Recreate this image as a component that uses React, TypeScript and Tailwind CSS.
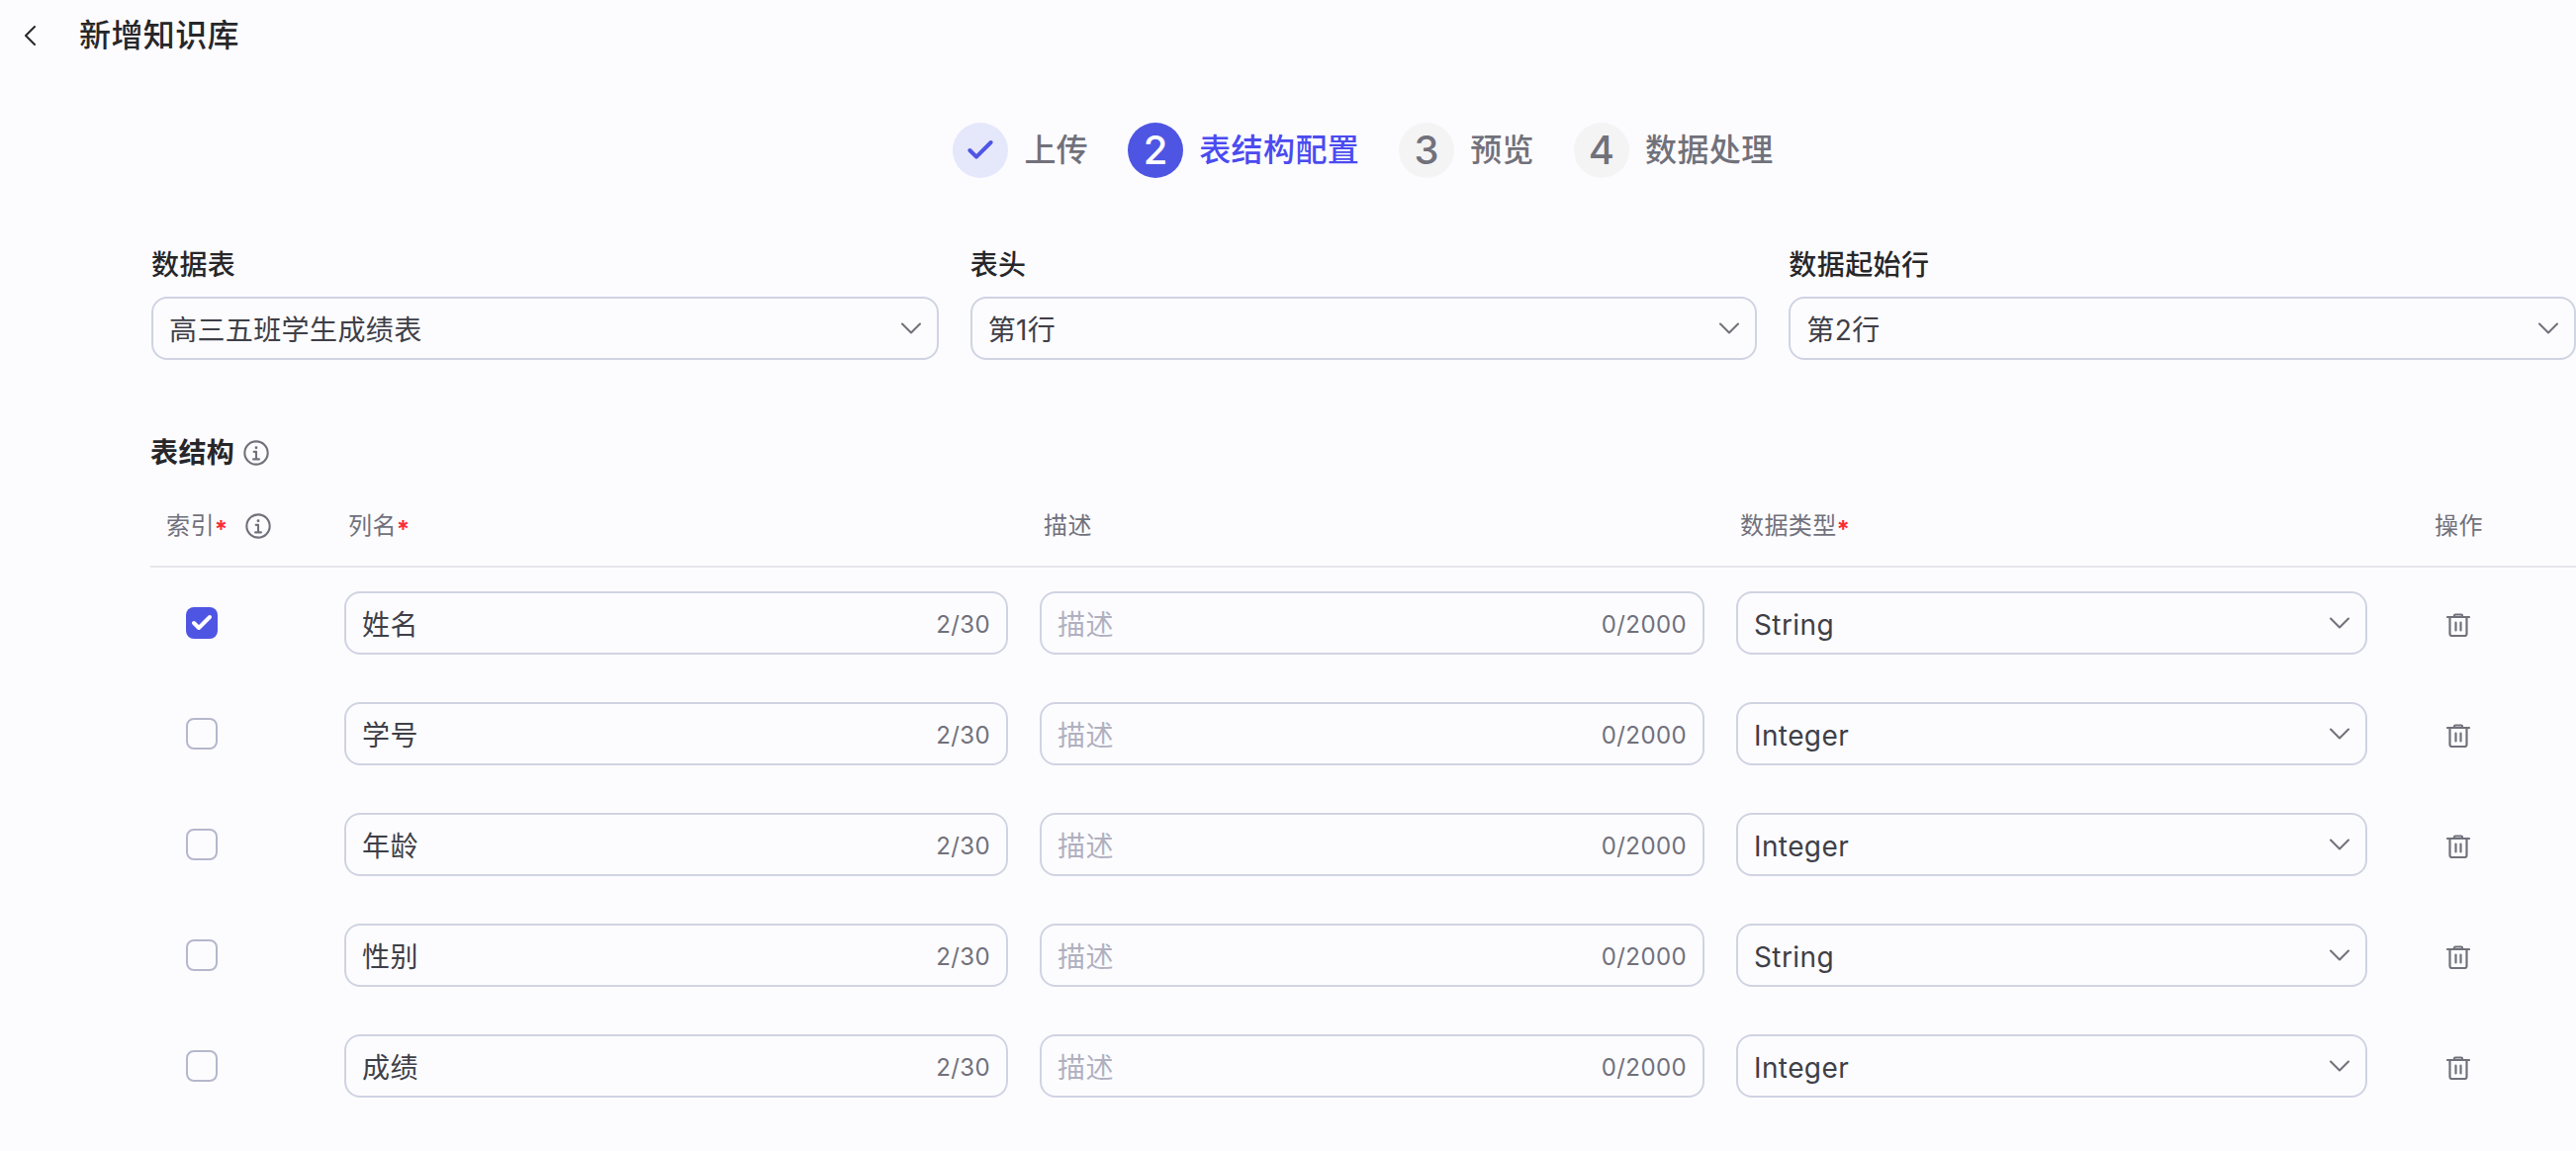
import { Check, ChevronDown } from "lucide-react";

const bodyText = "pt-1 text-[28px] leading-10";
const fieldBox = "flex h-16 items-center justify-between rounded-2xl border-2 border-[#d0d3e2] pl-4 text-zinc-700";
const tableCols = "grid grid-cols-[164px_671px_672px_638px_1fr] gap-x-8";

const steps = [
  { label: "上传", state: "done" },
  { label: "表结构配置", state: "active" },
  { label: "预览", state: "todo" },
  { label: "数据处理", state: "todo" },
];

const rows = [
  { name: "姓名", type: "String", indexed: true },
  { name: "学号", type: "Integer", indexed: false },
  { name: "年龄", type: "Integer", indexed: false },
  { name: "性别", type: "String", indexed: false },
  { name: "成绩", type: "Integer", indexed: false },
];

function InfoIcon() {
  return (
    <svg viewBox="0 0 24 24" fill="none" stroke="currentColor" strokeWidth="1.8" className="size-7 shrink-0 text-zinc-500">
      <circle cx="12" cy="12" r="10" />
      <circle cx="12" cy="7.500" r="1.200" fill="currentColor" stroke="none" />
      <path d="M10 11h2v6.500M9.500 17.500h5" strokeLinecap="round" strokeLinejoin="round" />
    </svg>
  );
}

function TrashIcon() {
  return (
    <svg viewBox="0 0 24 24" fill="none" stroke="currentColor" strokeWidth="2.2" strokeLinecap="round" strokeLinejoin="round" className="mt-1 size-6 text-zinc-500">
      <path d="M1 4h22M8 3.500V2.500a1 1 0 0 1 1-1h6a1 1 0 0 1 1 1v1" />
      <path d="M3.500 4v17a2 2 0 0 0 2 2h13a2 2 0 0 0 2-2V4" />
      <path d="M9.500 9.500v8M14.500 9.500v8" />
    </svg>
  );
}

function Required() {
  return <span className="relative top-1 text-2xl leading-none font-bold text-red-500">*</span>;
}

function SelectBox({ value }: { value: string }) {
  return (
    <div className={`${fieldBox} pr-2`}>
      <span className={bodyText}>{value}</span>
      <ChevronDown className="size-9 text-zinc-500" strokeWidth={1.4} />
    </div>
  );
}

function TextField({ value, placeholder, counter }: { value?: string; placeholder?: string; counter: string }) {
  return (
    <div className={`${fieldBox} pr-4`}>
      <span className={`${bodyText} ${value ? "" : "text-[#b0b0bf]"}`}>{value ?? placeholder}</span>
      <span className="pt-1 text-2xl text-zinc-500">{counter}</span>
    </div>
  );
}

function StepDot({ state, index }: { state: string; index: number }) {
  if (state === "done") {
    return (
      <div className="flex size-14 items-center justify-center rounded-full bg-[#e5e7fb] text-[#4f55e3]">
        <Check className="size-8" strokeWidth={3} />
      </div>
    );
  }
  return (
    <div className={`flex size-14 items-center justify-center rounded-full text-[40px] font-medium ${state === "active" ? "bg-[#4f55e3] text-white" : "bg-zinc-100 text-zinc-500"}`}>
      {index + 1}
    </div>
  );
}

export default function App() {
  return (
    <div className="min-h-screen overflow-hidden bg-[#fcfcff] font-[Inter,'Noto_Sans_CJK_SC',sans-serif] tracking-wide">
      <header className="flex h-20 items-center gap-9 pb-2 pl-4">
        <div className="flex size-7 items-center justify-center text-zinc-800">
          <svg viewBox="0 0 12 20" fill="none" stroke="currentColor" strokeWidth="2" strokeLinecap="round" strokeLinejoin="round" className="h-5 w-3">
            <path d="M11 1 2 10l9 9" />
          </svg>
        </div>
        <h1 className="text-[32px] font-medium text-zinc-800">新增知识库</h1>
      </header>

      <main className="pl-38">
        <div className="mt-11 flex justify-center gap-10">
          {steps.map((step, i) => (
            <div key={step.label} className="flex items-center gap-4">
              <StepDot state={step.state} index={i} />
              <span className={`text-[32px] font-medium ${step.state === "active" ? "text-[#4b4bf0]" : "text-zinc-500"}`}>{step.label}</span>
            </div>
          ))}
        </div>

        <div className="mt-16 grid grid-cols-3 gap-x-8 pl-px">
          {[
            { label: "数据表", value: "高三五班学生成绩表" },
            { label: "表头", value: "第1行" },
            { label: "数据起始行", value: "第2行" },
          ].map((f) => (
            <div key={f.label}>
              <div className="mb-2 text-[28px] leading-12 font-medium text-zinc-800">{f.label}</div>
              <SelectBox value={f.value} />
            </div>
          ))}
        </div>

        <div className="mt-18 flex h-11 items-center gap-2">
          <h2 className="text-[28px] font-semibold text-zinc-800">表结构</h2>
          <InfoIcon />
        </div>

        <div className={`${tableCols} border-b-2 border-gray-200 pt-9 pb-6 text-2xl leading-8 text-zinc-500`}>
          <div className="flex items-center pl-4">
            索引<Required />
            <span className="ml-4"><InfoIcon /></span>
          </div>
          <div className="pl-1">列名<Required /></div>
          <div className="pl-1">描述</div>
          <div className="pl-1">数据类型<Required /></div>
          <div className="pl-9">操作</div>
        </div>

        <div className="flex flex-col gap-12 pt-6">
          {rows.map((row) => (
            <div key={row.name} className={`${tableCols} items-center`}>
              <div className="pl-9">
                {row.indexed ? (
                  <div className="flex size-8 items-center justify-center rounded-lg bg-[#4f55e3] text-white">
                    <Check className="size-6" strokeWidth={4} />
                  </div>
                ) : (
                  <div className="size-8 rounded-lg border-2 border-[#b5b7cc]" />
                )}
              </div>
              <TextField value={row.name} counter="2/30" />
              <TextField placeholder="描述" counter="0/2000" />
              <SelectBox value={row.type} />
              <div className="ml-9 flex w-12 justify-center">
                <TrashIcon />
              </div>
            </div>
          ))}
        </div>
      </main>
    </div>
  );
}
